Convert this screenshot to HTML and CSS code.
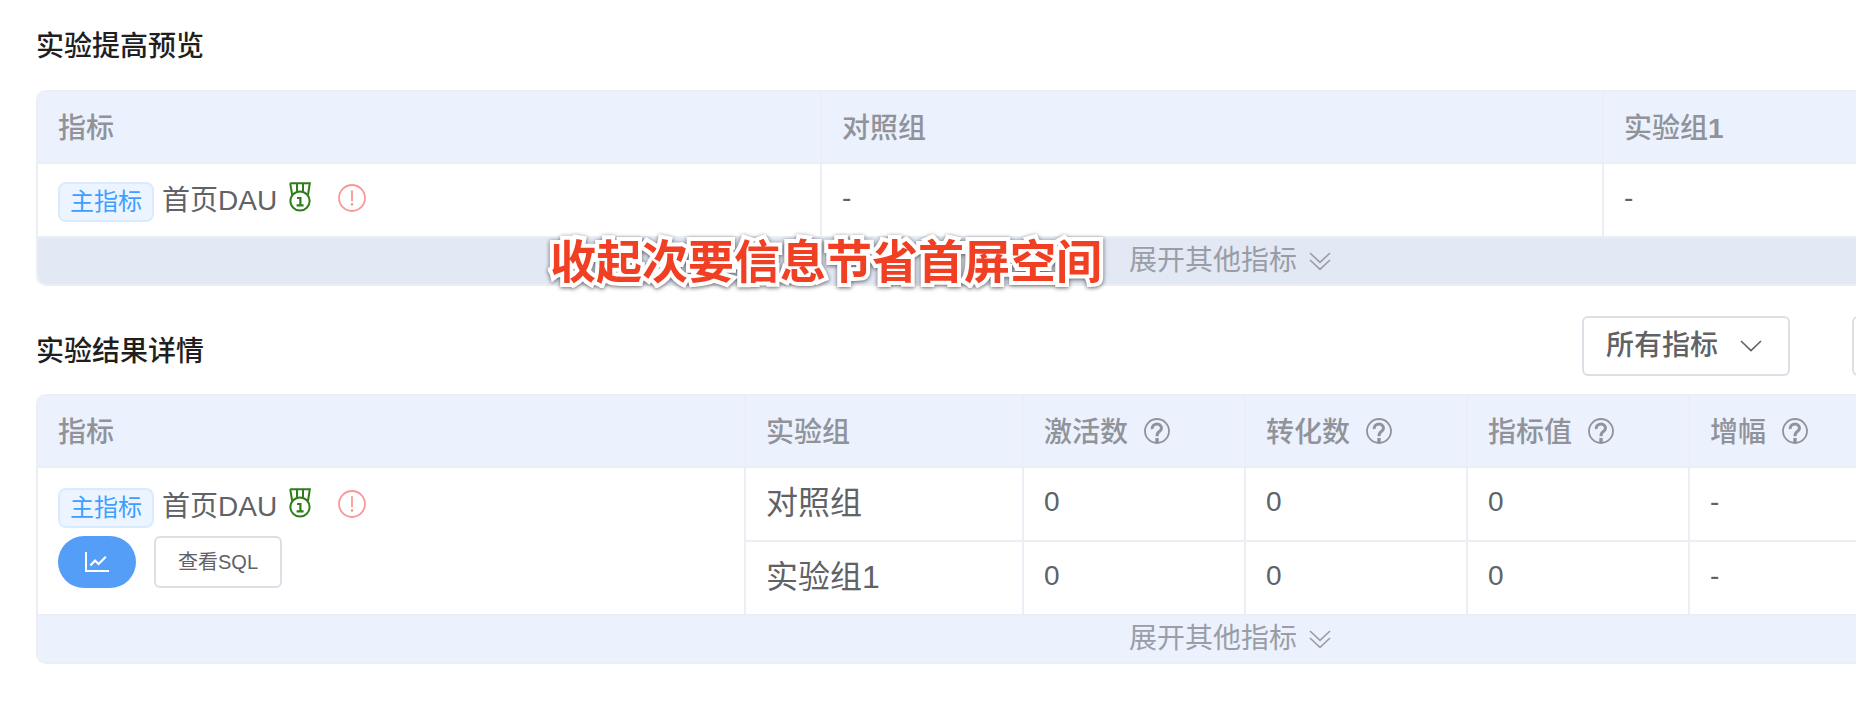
FILE: index.html
```html
<!DOCTYPE html>
<html lang="zh-CN">
<head>
<meta charset="utf-8">
<title>实验结果</title>
<link rel="stylesheet" href="styles.css">
</head>
<body>
<svg class="sprite" aria-hidden="true">
  <symbol id="medal" viewBox="0 0 22 30">
    <g fill="none" stroke="currentColor" stroke-width="2">
      <path d="M1.2 1.2H20.8L19 13M1.2 1.2L3.2 13M8 1.2V9.5M14 1.2V9.5"/>
      <circle cx="11" cy="19" r="9.6"/>
      <path d="M8 16H11.4V23.4M7.6 23.4H14.6" stroke-width="2.2"/>
    </g>
  </symbol>
  <symbol id="warn" viewBox="0 0 28 28">
    <circle cx="14" cy="14" r="13" fill="none" stroke="currentColor" stroke-width="1.8"/>
    <path d="M14 7V16.4" stroke="currentColor" stroke-width="1.8" stroke-linecap="round"/>
    <circle cx="14" cy="20.4" r="1.3" fill="currentColor"/>
  </symbol>
  <symbol id="help" viewBox="0 0 26 26">
    <g fill="none" stroke="currentColor">
      <circle cx="13" cy="13" r="12" stroke-width="1.8"/>
      <path d="M8.4 11A4.6 3.9 0 1 1 15.6 13.2Q13 14.8 13 18.2" stroke-width="3"/>
      <path d="M13 20V24.6" stroke-width="3.4"/>
    </g>
  </symbol>
  <symbol id="double-down" viewBox="0 0 22 20">
    <path d="M1 2L11 11.4L21 2M1 9L11 18.4L21 9" fill="none" stroke="currentColor" stroke-width="1.6"/>
  </symbol>
  <symbol id="down" viewBox="0 0 22 12">
    <path d="M1 1L11 10.6L21 1" fill="none" stroke="currentColor" stroke-width="1.6"/>
  </symbol>
  <symbol id="chart" viewBox="0 0 24 20">
    <path d="M1 0V19H24" fill="none" stroke="currentColor" stroke-width="2"/>
    <path d="M5.4 13.6L10 8.6L13.6 12L20.8 4.8" fill="none" stroke="currentColor" stroke-width="2.2"/>
  </symbol>
</svg>

<main class="page">
  <section class="section">
    <div class="section-head">
      <h2 class="title">实验提高预览</h2>
    </div>
    <div class="panel">
      <table class="grid">
        <colgroup><col class="col-wide"><col class="col-group"><col></colgroup>
        <thead>
          <tr><th>指标</th><th>对照组</th><th>实验组<b>1</b></th></tr>
        </thead>
        <tbody>
          <tr>
            <td class="cell-metric">
              <div class="metric">
                <span class="tag">主指标</span>
                <span class="metric-name">首页DAU</span>
                <svg class="medal"><use href="#medal"/></svg>
                <svg class="warn"><use href="#warn"/></svg>
              </div>
            </td>
            <td>-</td>
            <td>-</td>
          </tr>
        </tbody>
      </table>
      <button type="button" class="expand expand-active">展开其他指标<svg class="expand-icon"><use href="#double-down"/></svg></button>
      <p class="callout">收起次要信息节省首屏空间</p>
    </div>
  </section>

  <section class="section">
    <div class="section-head section-head-tools">
      <h2 class="title">实验结果详情</h2>
      <div class="tools">
        <div class="picker">
          <select class="picker-select" aria-label="指标"><option>所有指标</option></select>
          <svg class="picker-icon"><use href="#down"/></svg>
        </div>
        <input class="filter" type="text" aria-label="实验组">
      </div>
    </div>
    <div class="panel">
      <table class="grid">
        <colgroup><col class="col-metric"><col class="col-name"><col class="col-value"><col class="col-value"><col class="col-value"><col></colgroup>
        <thead>
          <tr>
            <th>指标</th>
            <th>实验组</th>
            <th><span class="head-help">激活数<svg class="help"><use href="#help"/></svg></span></th>
            <th><span class="head-help">转化数<svg class="help"><use href="#help"/></svg></span></th>
            <th><span class="head-help">指标值<svg class="help"><use href="#help"/></svg></span></th>
            <th><span class="head-help">增幅<svg class="help"><use href="#help"/></svg></span></th>
          </tr>
        </thead>
        <tbody>
          <tr>
            <td rowspan="2" class="cell-detail">
              <div class="metric">
                <span class="tag">主指标</span>
                <span class="metric-name">首页DAU</span>
                <svg class="medal"><use href="#medal"/></svg>
                <svg class="warn"><use href="#warn"/></svg>
              </div>
              <div class="actions">
                <button type="button" class="chart-button" aria-label="趋势图"><svg class="chart-icon"><use href="#chart"/></svg></button>
                <button type="button" class="sql-button">查看SQL</button>
              </div>
            </td>
            <td class="cell-name">对照组</td><td>0</td><td>0</td><td>0</td><td>-</td>
          </tr>
          <tr>
            <td class="cell-name">实验组1</td><td>0</td><td>0</td><td>0</td><td>-</td>
          </tr>
        </tbody>
      </table>
      <button type="button" class="expand">展开其他指标<svg class="expand-icon"><use href="#double-down"/></svg></button>
    </div>
  </section>
</main>
</body>
</html>
```
FILE: styles.css
```css
* {
  box-sizing: border-box;
}

body {
  margin: 0;
  overflow: hidden;
  background: #fff;
  color: #606266;
  font-family: "Liberation Sans", "Noto Sans CJK SC", sans-serif;
  font-size: 28px;
  line-height: 40px;
}

button,
select,
input {
  font: inherit;
  color: inherit;
}

svg {
  display: block;
  flex: none;
}

.sprite {
  position: absolute;
  width: 0;
  height: 0;
}

/* The tables are wider than the window and run off its right side. */
.page {
  width: calc(100% + 604px);
  padding: 0 36px;
}

.section-head {
  display: flex;
  align-items: center;
  justify-content: space-between;
  height: 90px;
  padding-top: 4px;
}

.section-head-tools {
  height: 108px;
  padding-top: 24px;
}

.title {
  margin: 0;
  color: #1f1f1f;
  font-size: 28px;
  font-weight: 500;
}

.tools {
  display: flex;
  gap: 62px;
  padding-bottom: 12px;
}

.picker {
  position: relative;
}

.picker-select {
  appearance: none;
  width: 208px;
  height: 60px;
  padding: 0 22px;
  border: 2px solid #dcdfe6;
  border-radius: 6px;
  background: #fff;
  font-weight: 500;
}

.picker-icon {
  position: absolute;
  top: 24px;
  right: 28px;
  width: 22px;
  height: 12px;
  pointer-events: none;
}

.filter {
  width: 572px;
  height: 60px;
  border: 2px solid #dcdfe6;
  border-radius: 6px;
}

.panel {
  position: relative;
  border: 2px solid #ebeef5;
  border-radius: 10px;
}

.grid {
  width: 100%;
  table-layout: fixed;
  border-collapse: separate;
  border-spacing: 0;
}

.col-wide { width: 784px; }
.col-group { width: 782px; }
.col-metric { width: 708px; }
.col-name { width: 278px; }
.col-value { width: 222px; }

.grid th,
.grid td {
  padding: 0 20px 4px;
  border-right: 2px solid #ebeef5;
  border-bottom: 2px solid #ebeef5;
  text-align: left;
}

.grid th {
  height: 72px;
  padding: 4px 20px 0;
  background: #ebf1fd;
  color: #909399;
  font-weight: 500;
}

.grid th:first-child {
  border-top-left-radius: 8px;
}

.grid td {
  height: 74px;
}

.grid .cell-name {
  padding-bottom: 2px;
  font-size: 32px;
}

.grid .cell-metric {
  padding: 4px 20px 0;
}

.grid .cell-detail {
  padding-top: 20px;
  vertical-align: top;
}

.metric {
  display: flex;
}

.tag {
  height: 40px;
  padding: 0 10px;
  border: 2px solid #d9ecff;
  border-radius: 8px;
  background: #ecf5ff;
  color: #409eff;
  font-size: 24px;
  line-height: 36px;
}

.metric-name {
  margin-left: 8px;
  line-height: 38px;
}

.medal {
  width: 22px;
  height: 30px;
  margin-left: 12px;
  color: #2e7d1a;
}

.warn {
  width: 28px;
  height: 28px;
  margin: 2px 0 0 27px;
  color: #f89898;
}

.actions {
  display: flex;
  gap: 18px;
  margin-top: 8px;
}

.chart-button {
  display: grid;
  place-items: center;
  width: 78px;
  height: 52px;
  border: 0;
  border-radius: 26px;
  background: #559ef8;
  color: #fff;
}

.chart-icon {
  width: 24px;
  height: 20px;
}

.sql-button {
  width: 128px;
  height: 52px;
  padding: 0;
  border: 2px solid #dcdfe6;
  border-radius: 6px;
  background: #fff;
  font-size: 20px;
}

.head-help {
  display: flex;
  align-items: center;
  gap: 16px;
}

.help {
  width: 26px;
  height: 26px;
  margin-bottom: 4px;
}

.expand {
  display: flex;
  align-items: center;
  justify-content: center;
  gap: 12px;
  width: 100%;
  height: 46px;
  padding: 0;
  border: 0;
  border-radius: 0 0 8px 8px;
  background: #ebf1fd;
  color: #9a9da6;
}

.expand-active {
  background: #e2e8f4;
}

.expand-icon {
  width: 22px;
  height: 20px;
}

/* Annotation lettering that lies over the collapsed band. */
.callout {
  position: absolute;
  bottom: -8px;
  left: 512px;
  margin: 0;
  color: #f03f23;
  font-size: 46px;
  font-weight: 700;
  line-height: 60px;
  white-space: nowrap;
  -webkit-text-stroke: 8px #fff;
  paint-order: stroke fill;
  stroke-linejoin: round;
  filter: drop-shadow(0 1px 2px rgba(0, 0, 0, 0.6));
}
```
